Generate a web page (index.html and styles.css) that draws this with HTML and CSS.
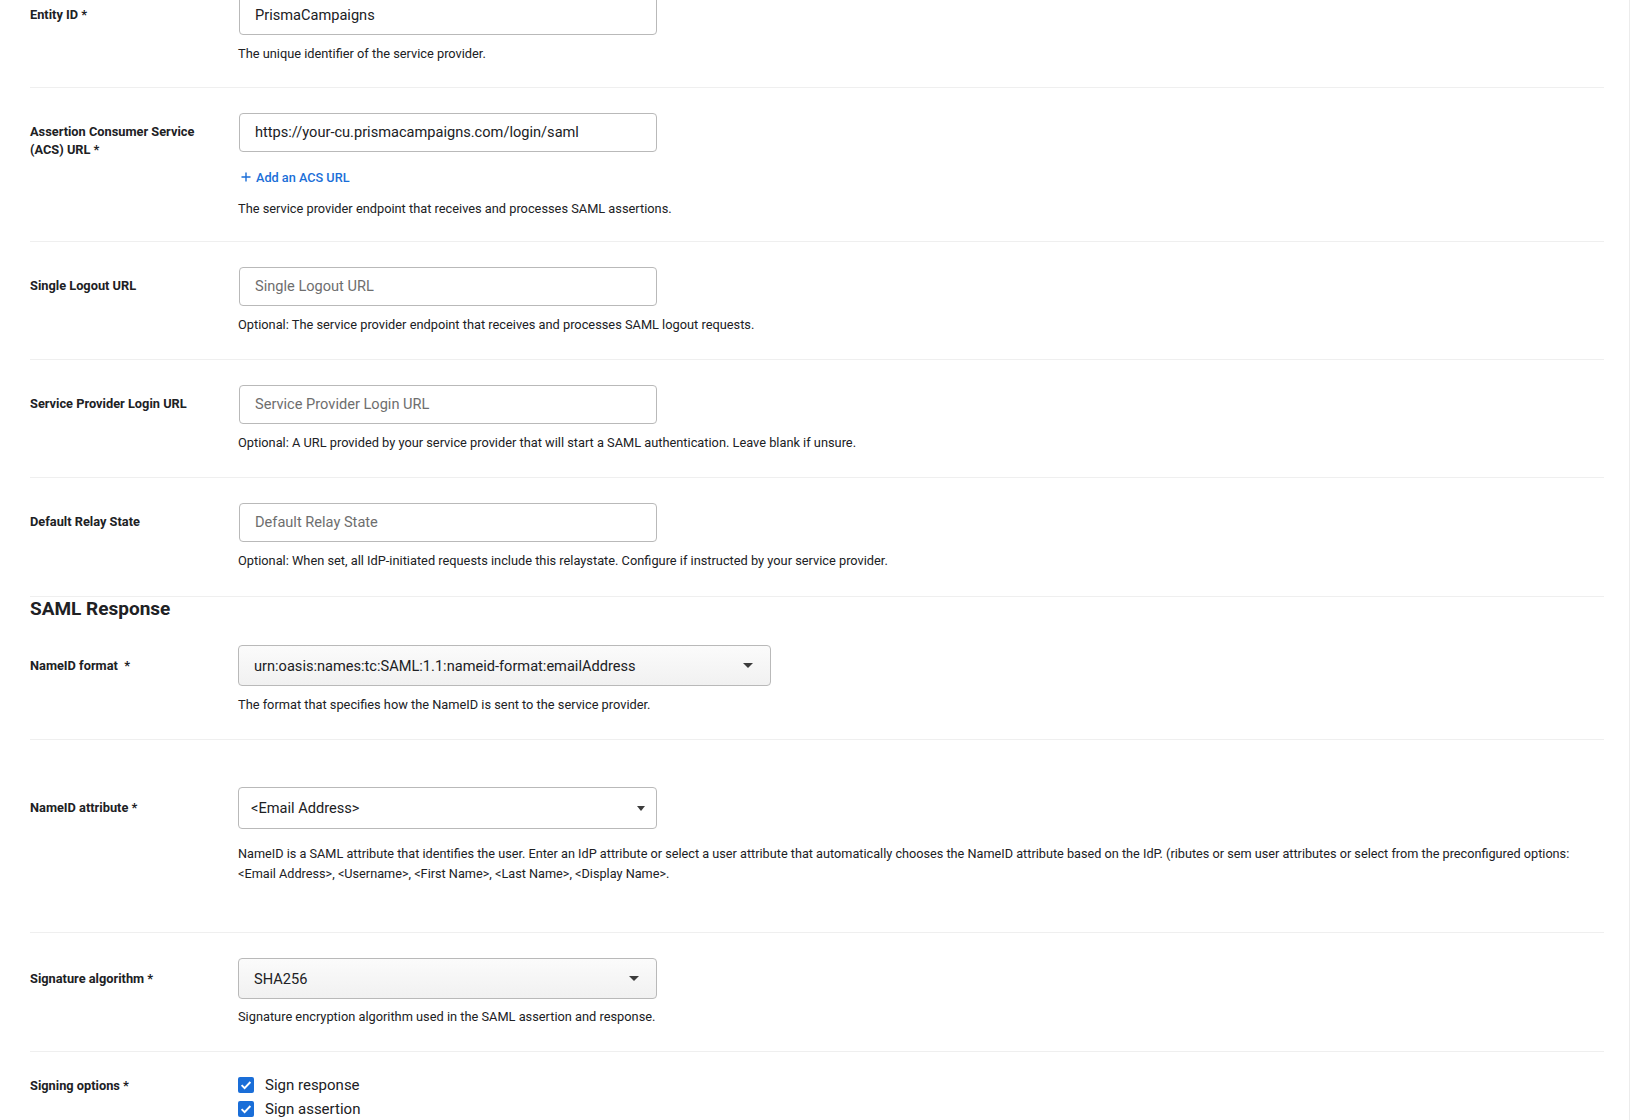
FILE: index.html
```html
<!DOCTYPE html>
<html lang="en">
<head>
<meta charset="utf-8">
<title>SAML Service Provider</title>
<link rel="stylesheet" href="styles.css">
</head>
<body>
<div class="page">
  <div class="form">
    <div class="row first">
      <div class="label">Entity ID *</div>
      <div class="field">
        <div class="input">PrismaCampaigns</div>
        <div class="help">The unique identifier of the service provider.</div>
      </div>
    </div>

    <div class="row acs-row">
      <div class="label">Assertion Consumer Service<br>(ACS) URL *</div>
      <div class="field">
        <div class="input">https://your-cu.prismacampaigns.com/login/saml</div>
        <div class="add-link">
          <svg class="plus" width="10" height="10" viewBox="0 0 10 10"><path d="M5 0.5v9M0.5 5h9" stroke="#1a6ed8" stroke-width="1.4" fill="none"/></svg>
          <span>Add an ACS URL</span>
        </div>
        <div class="help help-after-link">The service provider endpoint that receives and processes SAML assertions.</div>
      </div>
    </div>

    <div class="row">
      <div class="label">Single Logout URL</div>
      <div class="field">
        <div class="input placeholder">Single Logout URL</div>
        <div class="help">Optional: The service provider endpoint that receives and processes SAML logout requests.</div>
      </div>
    </div>

    <div class="row">
      <div class="label">Service Provider Login URL</div>
      <div class="field">
        <div class="input placeholder">Service Provider Login URL</div>
        <div class="help">Optional: A URL provided by your service provider that will start a SAML authentication. Leave blank if unsure.</div>
      </div>
    </div>

    <div class="row last-top">
      <div class="label">Default Relay State</div>
      <div class="field">
        <div class="input placeholder">Default Relay State</div>
        <div class="help">Optional: When set, all IdP-initiated requests include this relaystate. Configure if instructed by your service provider.</div>
      </div>
    </div>

    <h2 class="section-title">SAML Response</h2>

    <div class="row no-border heading-follow">
      <div class="label label-select">NameID format &nbsp;*</div>
      <div class="field">
        <div class="select select-wide shaded"><span>urn:oasis:names:tc:SAML:1.1:nameid-format:emailAddress</span><i class="caret"></i></div>
        <div class="help">The format that specifies how the NameID is sent to the service provider.</div>
      </div>
    </div>

    <div class="row tall">
      <div class="label label-select">NameID attribute *</div>
      <div class="field">
        <div class="select plain"><span>&lt;Email Address&gt;</span><i class="caret caret-near"></i></div>
        <div class="help help-two">NameID is a SAML attribute that identifies the user. Enter an IdP attribute or select a user attribute that automatically chooses the NameID attribute based on the IdP. (ributes or sem user attributes or select from the preconfigured options:<br>&lt;Email Address&gt;, &lt;Username&gt;, &lt;First Name&gt;, &lt;Last Name&gt;, &lt;Display Name&gt;.</div>
      </div>
    </div>

    <div class="row">
      <div class="label label-select">Signature algorithm *</div>
      <div class="field">
        <div class="select shaded"><span>SHA256</span><i class="caret"></i></div>
        <div class="help help-tight">Signature encryption algorithm used in the SAML assertion and response.</div>
      </div>
    </div>

    <div class="row checks-row">
      <div class="label label-checks">Signing options *</div>
      <div class="field">
        <div class="check">
          <svg width="16" height="16" viewBox="0 0 16 16"><rect width="16" height="16" rx="2" fill="#1a6ed8"/><path d="M3.6 8.2l3 3 5.8-6.2" stroke="#fff" stroke-width="1.9" fill="none"/></svg>
          <span>Sign response</span>
        </div>
        <div class="check">
          <svg width="16" height="16" viewBox="0 0 16 16"><rect width="16" height="16" rx="2" fill="#1a6ed8"/><path d="M3.6 8.2l3 3 5.8-6.2" stroke="#fff" stroke-width="1.9" fill="none"/></svg>
          <span>Sign assertion</span>
        </div>
      </div>
    </div>
  </div>
</div>
</body>
</html>
```

FILE: styles.css
```css
html, body {
  margin: 0;
  padding: 0;
  background: #ffffff;
}

body {
  font-family: Roboto, "Liberation Sans", Arial, sans-serif;
  color: #202124;
  overflow: hidden;
  height: 1120px;
}

.page {
  width: 1630px;
  min-height: 1120px;
  box-sizing: border-box;
  border-right: 1px solid #ececec;
}

.form {
  padding: 0 25px 0 30px;
  margin-top: -29px;
}

.row {
  display: grid;
  grid-template-columns: 208px 1fr;
  padding: 25px 0;
  border-top: 1px solid #efefef;
}

.row.first {
  border-top: none;
  padding-bottom: 24px;
}

.row.acs-row {
  padding-bottom: 23px;
}

.row.last-top {
  padding-bottom: 26px;
}

.row.no-border {
  border-top: none;
}

.row.heading-follow {
  padding-top: 25px;
}

.row.tall {
  padding: 47px 0 48px;
}

.row.checks-row {
  padding: 21px 0 20px;
}

.label {
  font-size: 12.8px;
  line-height: 18px;
  font-weight: 700;
  color: #202124;
  padding-top: 10px;
}

.label-select {
  padding-top: 12px;
}

.label-checks {
  padding-top: 4px;
}

.field {
  display: flex;
  flex-direction: column;
  align-items: flex-start;
}

.input {
  width: 418px;
  height: 39px;
  box-sizing: border-box;
  margin-left: 1px;
  border: 1px solid #b9b9b9;
  border-radius: 4px;
  padding: 0 15px;
  font-size: 14.6px;
  line-height: 37px;
  color: #202124;
  background: #fff;
}

.input.placeholder {
  color: #6e6e6e;
}

.help {
  font-size: 12.8px;
  line-height: 18px;
  color: #202124;
  margin-top: 10px;
}

.help-after-link {
  margin-top: 14px;
}

.help-tight {
  margin-top: 9px;
}

.help-two {
  font-size: 12.7px;
  line-height: 20px;
  margin-top: 15px;
}

.add-link {
  display: flex;
  align-items: center;
  gap: 5px;
  margin-top: 16px;
  margin-left: 3px;
  height: 18px;
  font-size: 12.7px;
  font-weight: 500;
  color: #1a6ed8;
}

.plus {
  display: block;
}

.section-title {
  margin: 0;
  font-size: 19px;
  line-height: 23px;
  font-weight: 700;
  color: #202124;
  border-top: 1px solid #efefef;
}

.select {
  width: 419px;
  height: 41px;
  box-sizing: border-box;
  border: 1px solid #b9b9b9;
  border-radius: 4px;
  display: flex;
  align-items: center;
  justify-content: space-between;
  padding: 0 17px 0 15px;
  font-size: 14.6px;
  color: #202124;
}

.select-wide {
  width: 533px;
}

.select.shaded {
  background: linear-gradient(to bottom, #fbfbfb, #f1f1f1);
}

.select.plain {
  background: #fff;
  height: 42px;
  padding-left: 12px;
  padding-right: 11px;
}

.caret {
  display: block;
  width: 0;
  height: 0;
  border-left: 5px solid transparent;
  border-right: 5px solid transparent;
  border-top: 5px solid #3c3c3c;
}

.caret-near {
  border-left-width: 4px;
  border-right-width: 4px;
}

.check {
  display: flex;
  align-items: center;
  gap: 11px;
  height: 24px;
  font-size: 15px;
  color: #202124;
}

.check svg {
  display: block;
}
```
